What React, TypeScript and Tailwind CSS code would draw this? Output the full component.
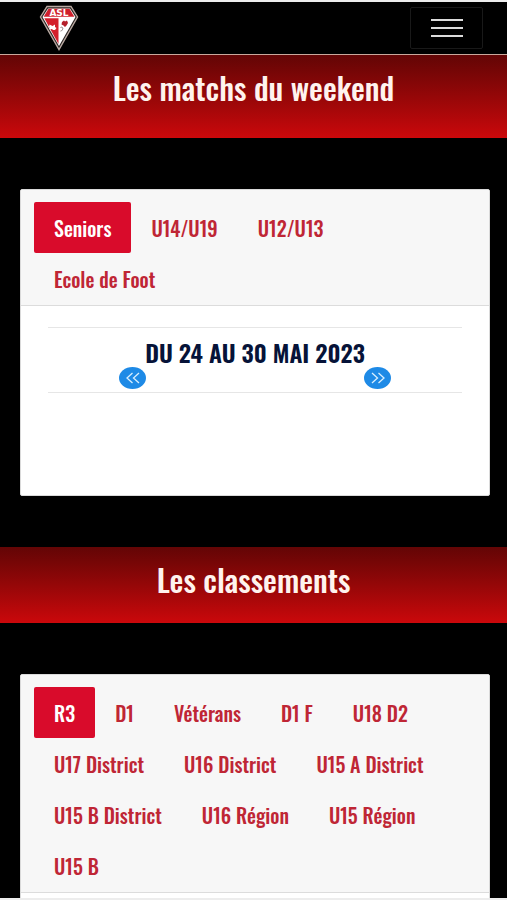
import { useState } from "react";

function Crest() {
  return (
    <svg viewBox="0 0 40 46" className="h-[46px] w-10" role="img" aria-label="ASL">
      <path d="M8 1.500H32L38.500 12 20 44.500 1.500 12Z" fill="#2a2422" stroke="#b9a9a2" strokeWidth="1.400" />
      <path d="M9 3.500H31L36.500 12 20 41 3.500 12Z" fill="#fff" />
      <path d="M9.500 3.800H30.500L35.400 11.800H4.600Z" fill="#cf1f2b" />
      <path d="M5.300 13.200H19.500V39Z" fill="#d3202c" />
      <path d="M10.500 19.500l3 1.500 2.500-1.500v2.500l1.500 1-1.500 2h-2l-1-1-2.500.5.500-1.500-1-1Z" fill="#fff" />
      <path d="M23 17l2-1.500 1 1 2-1 1 2.500-1.500 2.500-1.500 1.500-1.500-1.500-2-1Z" fill="#b41f2b" />
      <path d="M21.500 22.500c1.500-1 3 .5 2 2s-1.500 2-2 1.500" fill="none" stroke="#5a4a4a" strokeWidth=".7" />
      <text x="20" y="10.800" textAnchor="middle" className="fill-[#fff] font-['DejaVu_Sans',sans-serif] text-[9px] font-bold">
        ASL
      </text>
    </svg>
  );
}

function Tabs({ items, label }: { items: string[]; label: string }) {
  const [active, setActive] = useState(items[0]);
  return (
    <div role="tablist" aria-label={label} className="flex flex-wrap border-b border-[#dcdcdc] bg-[#f7f7f7] px-[13px] pt-3 pb-px">
      {items.map((item) => (
        <button
          key={item}
          type="button"
          role="tab"
          aria-selected={item === active}
          onClick={() => setActive(item)}
          className={
            item === active
              ? "h-[51px] rounded-xs bg-[#d90b2b] px-5 text-[20px] font-medium text-white"
              : "h-[51px] rounded-xs px-5 text-[20px] font-medium text-[#bf2635]"
          }
        >
          {item}
        </button>
      ))}
    </div>
  );
}

function Banner({ title, tall }: { title: string; tall?: boolean }) {
  return (
    <div className={`bg-linear-to-b from-[#630505] to-[#cb080b] pt-[13px] text-center ${tall ? "pb-8" : "pb-[25px]"}`}>
      <h2 className="text-[31px] leading-[38px] font-medium text-[#fff3ee]">{title}</h2>
    </div>
  );
}

function Arrow({ back }: { back?: boolean }) {
  return (
    <button
      type="button"
      aria-label={back ? "Semaine précédente" : "Semaine suivante"}
      className="flex h-[22px] w-[27px] items-center justify-center rounded-[50%] bg-[#1e8ae6]"
    >
      <svg viewBox="0 0 16 12" className="h-3 w-4" fill="none" stroke="#d8efff" strokeWidth="1.300" aria-hidden="true">
        <path d={back ? "M7.500 1 2 6l5.500 5M14 1 8.500 6l5.500 5" : "M2 1l5.500 5L2 11M8.500 1 14 6l-5.500 5"} />
      </svg>
    </button>
  );
}

export default function App() {
  return (
    <div className="h-screen overflow-hidden border-y-2 border-[#ededed] bg-black font-[Oswald,'Liberation_Sans_Narrow','Roboto_Condensed',Roboto,sans-serif]">
      <header className="flex h-[53px] items-center justify-between border-b border-[#c9a79b] pr-6 pl-[39px]">
        <a href="#accueil" aria-label="Accueil">
          <Crest />
        </a>
        <button
          type="button"
          aria-label="Menu"
          className="flex h-[42px] w-[73px] flex-col items-center justify-center gap-[6px] rounded-xs border border-[#191919]"
        >
          <span className="h-[2px] w-8 bg-[#dcdcdc]" />
          <span className="h-[2px] w-8 bg-[#dcdcdc]" />
          <span className="h-[2px] w-8 bg-[#dcdcdc]" />
        </button>
      </header>
      <main>
        <section>
          <Banner title="Les matchs du weekend" tall />
          <div className="mt-[51px] mr-[17px] mb-[51px] ml-5 overflow-hidden rounded-xs border border-[#dadada] bg-white">
            <Tabs label="Équipes" items={["Seniors", "U14/U19", "U12/U13", "Ecole de Foot"]} />
            <div className="h-[189px] px-[27px] pt-[21px]">
              <div className="border-y border-[#e6e6e6] pt-[9px] pb-[3px]">
                <p className="text-center text-[24px] leading-[30px] font-semibold text-[#061338]">DU 24 AU 30 MAI 2023</p>
                <div className="flex justify-between px-[71px]">
                  <Arrow back />
                  <Arrow />
                </div>
              </div>
            </div>
          </div>
        </section>
        <section>
          <Banner title="Les classements" />
          <div className="mt-[51px] mr-[17px] ml-5 overflow-hidden rounded-xs border border-[#dadada] bg-white pb-10">
            <Tabs
              label="Championnats"
              items={[
                "R3", "D1", "Vétérans", "D1 F", "U18 D2",
                "U17 District", "U16 District", "U15 A District",
                "U15 B District", "U16 Région", "U15 Région", "U15 B",
              ]}
            />
          </div>
        </section>
      </main>
    </div>
  );
}
